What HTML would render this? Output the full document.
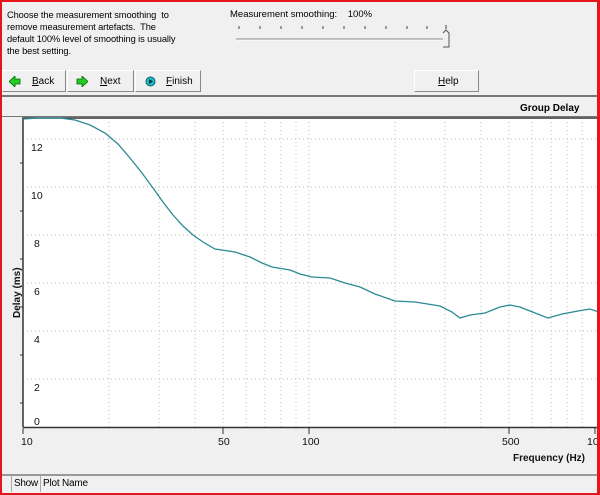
<!DOCTYPE html>
<html><head><style>
*{margin:0;padding:0;box-sizing:border-box}
body{width:600px;height:495px;overflow:hidden;background:#f0f0f0;font-family:"Liberation Sans",sans-serif;font-size:10px;color:#000;position:relative}
.frame{position:absolute;left:0;top:0;width:600px;height:495px;border:2px solid #e8141c;border-right-width:3px;pointer-events:none;z-index:10}
.t{position:absolute;white-space:nowrap}
.btn{position:absolute;height:22px;top:70px;border:1px solid;border-color:#fff #888 #888 #fff;background:#f0f0f0;font-size:10px}
.btn span{position:absolute;top:5px}
</style></head><body>
<div class="t" style="left:7px;top:9px;line-height:12px;font-size:9.3px;letter-spacing:-0.1px">Choose the measurement smoothing&nbsp; to<br>remove measurement artefacts.&nbsp; The<br>default 100% level of smoothing is usually<br>the best setting.</div>
<div class="t" style="left:230px;top:9px;font-size:9.5px">Measurement smoothing:&nbsp;&nbsp;&nbsp; 100%</div>
<svg style="position:absolute;left:230px;top:22px" width="230" height="30">
<g stroke="#444" stroke-width="1">
<line x1="9" y1="4" x2="9" y2="7"/><line x1="30" y1="4" x2="30" y2="7"/><line x1="51" y1="4" x2="51" y2="7"/><line x1="72" y1="4" x2="72" y2="7"/><line x1="93" y1="4" x2="93" y2="7"/><line x1="114" y1="4" x2="114" y2="7"/><line x1="135" y1="4" x2="135" y2="7"/><line x1="156" y1="4" x2="156" y2="7"/><line x1="177" y1="4" x2="177" y2="7"/><line x1="197" y1="4" x2="197" y2="7"/><line x1="216" y1="3" x2="216" y2="7"/>
</g>
<line x1="6" y1="17" x2="214" y2="17" stroke="#888"/><line x1="6" y1="18" x2="214" y2="18" stroke="#fff"/>
<path d="M213 11 L216 8 L219 11 L219 25 L213 25" fill="#f0f0f0" stroke="#555"/>
</svg>
<div class="btn" style="left:2px;width:64px"><svg style="position:absolute;left:6px;top:5px" width="12" height="11"><path d="M0 5.5 L6 0 V3 H11 V8 H6 V11Z" fill="#2c2" stroke="#060" stroke-width=".8"/></svg><span style="left:29px"><u>B</u>ack</span></div>
<div class="btn" style="left:67px;width:67px"><svg style="position:absolute;left:8px;top:5px" width="12" height="11"><path d="M12 5.5 L6 0 V3 H1 V8 H6 V11Z" fill="#2c2" stroke="#060" stroke-width=".8"/></svg><span style="left:32px"><u>N</u>ext</span></div>
<div class="btn" style="left:135px;width:66px"><svg style="position:absolute;left:9px;top:5px" width="11" height="11"><circle cx="5.5" cy="5.5" r="4.5" fill="#2bc" stroke="#066"/><path d="M4 3 L8 5.5 L4 8Z" fill="#033"/></svg><span style="left:30px"><u>F</u>inish</span></div>
<div class="btn" style="left:414px;width:65px"><span style="left:23px"><u>H</u>elp</span></div>
<div style="position:absolute;left:2px;top:95px;width:596px;height:2px;background:#777"></div>
<div class="t" style="left:520px;top:103px;font-weight:bold;font-size:10px">Group Delay</div>
<div style="position:absolute;left:2px;top:116px;width:596px;height:1px;background:#777"></div>
<svg style="position:absolute;left:0;top:0" width="600" height="495">
<rect x="23" y="118" width="576" height="310" fill="#fff"/>
<g stroke="#bbb" stroke-dasharray="1,3">
<line x1="109" y1="118" x2="109" y2="427"/><line x1="159" y1="118" x2="159" y2="427"/><line x1="195" y1="118" x2="195" y2="427"/><line x1="223" y1="118" x2="223" y2="427"/><line x1="246" y1="118" x2="246" y2="427"/><line x1="265" y1="118" x2="265" y2="427"/><line x1="281" y1="118" x2="281" y2="427"/><line x1="296" y1="118" x2="296" y2="427"/><line x1="309" y1="118" x2="309" y2="427"/>
<line x1="395" y1="118" x2="395" y2="427"/><line x1="445" y1="118" x2="445" y2="427"/><line x1="481" y1="118" x2="481" y2="427"/><line x1="509" y1="118" x2="509" y2="427"/><line x1="532" y1="118" x2="532" y2="427"/><line x1="551" y1="118" x2="551" y2="427"/><line x1="567" y1="118" x2="567" y2="427"/><line x1="582" y1="118" x2="582" y2="427"/>
<line x1="23" y1="139" x2="598" y2="139"/><line x1="23" y1="187" x2="598" y2="187"/><line x1="23" y1="235" x2="598" y2="235"/><line x1="23" y1="283" x2="598" y2="283"/><line x1="23" y1="331" x2="598" y2="331"/><line x1="23" y1="379" x2="598" y2="379"/>
</g>
<path d="M23 427 V118 H599" fill="none" stroke="#333" stroke-width="1.5"/>
<line x1="23" y1="427.5" x2="599" y2="427.5" stroke="#333" stroke-width="1.5"/>
<g stroke="#333"><line x1="20" y1="163" x2="23" y2="163"/><line x1="20" y1="211" x2="23" y2="211"/><line x1="20" y1="259" x2="23" y2="259"/><line x1="20" y1="307" x2="23" y2="307"/><line x1="20" y1="355" x2="23" y2="355"/><line x1="20" y1="403" x2="23" y2="403"/>
<line x1="23" y1="428" x2="23" y2="434"/><line x1="223" y1="428" x2="223" y2="434"/><line x1="309" y1="428" x2="309" y2="434"/><line x1="509" y1="428" x2="509" y2="434"/><line x1="595" y1="428" x2="595" y2="434"/></g>
<path d="M23 119 L40 118 L60 118 L75 120 L90 125 L105 133 L118 144 L130 158 L142 173 L153 188 L163 202 L173 215 L183 226 L193 235 L203 242 L215 249 L235 252 L250 257 L262 263 L272 267 L290 270 L300 274 L312 277 L330 278 L345 283 L360 287 L375 294 L395 301 L415 302 L440 306 L452 312 L460 318 L470 315 L485 313 L500 307 L510 305 L520 307 L535 313 L548 318 L562 314 L578 311 L590 309 L599 312" fill="none" stroke="#2a8a94" stroke-width="1.3"/>
<g font-family="Liberation Sans" font-size="10.5" fill="#111">
<text x="31" y="151">12</text><text x="31" y="199">10</text><text x="34" y="247">8</text><text x="34" y="295">6</text><text x="34" y="343">4</text><text x="34" y="391">2</text><text x="34" y="425">0</text>
<text x="21" y="445">10</text><text x="218" y="445">50</text><text x="302" y="445">100</text><text x="502" y="445">500</text><text x="587" y="445">100</text>
<text x="513" y="461" font-weight="bold" font-size="10" textLength="72">Frequency (Hz)</text>
<text transform="translate(20,318) rotate(-90)" font-weight="bold" font-size="10">Delay (ms)</text>
</g>
</svg>
<div style="position:absolute;left:2px;top:474px;width:596px;height:19px;border-top:2px solid #999;background:#f0f0f0"></div>
<div style="position:absolute;left:11px;top:476px;width:1px;height:16px;background:#aaa"></div>
<div style="position:absolute;left:40px;top:476px;width:1px;height:16px;background:#aaa"></div>
<div class="t" style="left:14px;top:478px;font-size:10px;letter-spacing:-0.3px">Show</div>
<div class="t" style="left:43px;top:478px;font-size:10px;letter-spacing:-0.2px">Plot Name</div>
<div class="frame"></div>
</body></html>
